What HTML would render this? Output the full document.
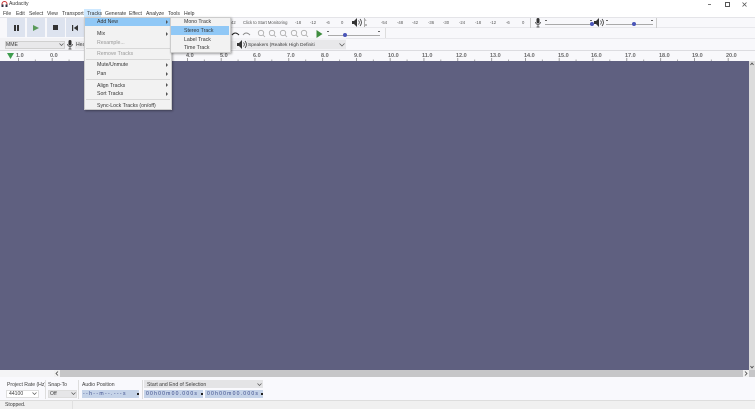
<!DOCTYPE html>
<html><head><meta charset="utf-8"><style>
html,body{margin:0;padding:0}
body{width:755px;height:409px;overflow:hidden;position:relative;background:#f9f9fc;font-family:"Liberation Sans",sans-serif;color:#333;filter:blur(.3px)}
.a{position:absolute;white-space:nowrap}
.t{position:absolute;white-space:nowrap;font-size:5.1px;line-height:7px;color:#3a3a3a}
.m{position:absolute;top:11px;font-size:5.1px;line-height:7px;color:#333;white-space:nowrap}
.r{position:absolute;top:53px;font-size:5.5px;line-height:7px;color:#444;white-space:nowrap;font-weight:bold;opacity:.8}
.i{position:absolute;font-size:5.2px;line-height:7px;color:#333;white-space:nowrap}
.d{position:absolute;background:#d8d8d8;height:1px}
.b{position:absolute;top:18px;width:18px;height:19px;background:#dde3ef}
.n{position:absolute;top:20px;font-size:4.2px;line-height:5px;color:#555;white-space:nowrap}
.k{position:absolute;font-size:5.1px;line-height:7px;color:#3a4a8a;white-space:nowrap;letter-spacing:1.2px}
</style></head><body>
<div class="a" style="left:0;top:0;width:755px;height:9px;background:#fff"></div>
<svg class="a" style="left:1px;top:1px" width="7" height="7" viewBox="0 0 7 7"><path d="M1 4V3a2.500 2.500 0 0 1 5 0v1" fill="none" stroke="#c33" stroke-width="1"/><rect x="0.500" y="3.500" width="2" height="2.500" fill="#334"/><rect x="4.500" y="3.500" width="2" height="2.500" fill="#334"/></svg>
<div class="t" style="left:9px;top:1px">Audacity</div>
<div class="a" style="left:708px;top:4px;width:3px;height:1px;background:#777"></div>
<div class="a" style="left:725px;top:2px;width:3px;height:3px;border:1px solid #555"></div>
<svg class="a" style="left:741px;top:1px" width="7" height="7"><path d="M1.500 1.500l4 4M5.500 1.500l-4 4" stroke="#555" stroke-width=".8"/></svg>

<div class="a" style="left:0;top:9px;width:755px;height:8px;background:#fff"></div>
<div class="m" style="left:3px">File</div><div class="m" style="left:16px">Edit</div><div class="m" style="left:29px">Select</div><div class="m" style="left:47px">View</div><div class="m" style="left:62px">Transport</div>
<div class="a" style="left:84px;top:9px;width:17px;height:8px;background:#cde8ff"></div><div class="m" style="left:87px">Tracks</div>
<div class="m" style="left:105px">Generate</div><div class="m" style="left:129px">Effect</div><div class="m" style="left:146px">Analyze</div><div class="m" style="left:168px">Tools</div><div class="m" style="left:184px">Help</div>

<div class="a" style="left:0;top:17px;width:755px;height:33px;background:#f8f8fb"></div>
<div class="d" style="left:0;top:17px;width:755px;background:#e4e4e8"></div>
<div class="d" style="left:231px;top:27px;width:524px;background:#e8e8ec"></div>
<div class="d" style="left:231px;top:38px;width:524px;background:#e8e8ec"></div>
<div class="a" style="left:0;top:38px;width:346px;height:12px;background:#f2f2f5"></div>
<div class="b" style="left:7px"></div><div class="b" style="left:27px"></div><div class="b" style="left:47px"></div><div class="b" style="left:66px"></div>
<div class="a" style="left:13.500px;top:25px;width:2px;height:6px;background:#333"></div><div class="a" style="left:16.500px;top:25px;width:2px;height:6px;background:#333"></div>
<svg class="a" style="left:33px;top:25px" width="6" height="6"><path d="M0 0L6 3L0 6Z" fill="#5a9a5a"/></svg>
<div class="a" style="left:53px;top:25px;width:5px;height:5px;background:#333"></div>
<svg class="a" style="left:72px;top:25px" width="6" height="6"><path d="M0 0h1.200v6H0zM6 0v6L1.800 3z" fill="#333"/></svg>

<div class="a" style="left:5px;top:41px;width:60px;height:8px;background:#e8e8ea;border:1px solid #d0d0d0;box-sizing:border-box"></div>
<div class="t" style="left:6px;top:41.500px">MME</div>
<svg class="a" style="left:59px;top:43px" width="5" height="4"><path d="M.5.500l2 2 2-2" fill="none" stroke="#555" stroke-width=".7"/></svg>
<svg class="a" style="left:67px;top:40px" width="6" height="10"><rect x="1.500" y="0" width="3" height="5.500" rx="1.500" fill="#333"/><path d="M.5 4a2.500 2.500 0 0 0 5 0M3 7v2M1.500 9h3" fill="none" stroke="#333" stroke-width=".7"/></svg>
<div class="a" style="left:75px;top:41px;width:10px;height:8px;background:#e8e8ea"></div>
<div class="t" style="left:76px;top:41.500px">Hea</div>

<!-- Meter row -->
<div class="n" style="left:231px">42</div><div class="n" style="left:243px">Click to Start Monitoring</div>
<div class="n" style="left:295px">-18</div><div class="n" style="left:310px">-12</div><div class="n" style="left:326px">-6</div><div class="n" style="left:341px">0</div>
<svg class="a" style="left:352px;top:18px" width="10" height="9"><path d="M0 3h2l3-3v9l-3-3H0z" fill="#333"/><path d="M6.500 2.500a3 3 0 0 1 0 4M8 1a5 5 0 0 1 0 7" fill="none" stroke="#333" stroke-width=".8"/></svg>
<div class="a" style="left:363.500px;top:18px;width:1px;height:9px;background:#aaa"></div>
<div class="n" style="left:365px;top:18px;font-size:3px">L</div><div class="n" style="left:365px;top:23px;font-size:3px">R</div>
<div class="n" style="left:381px">-54</div><div class="n" style="left:397px">-48</div><div class="n" style="left:412px">-42</div><div class="n" style="left:428px">-36</div><div class="n" style="left:443px">-30</div><div class="n" style="left:459px">-24</div><div class="n" style="left:475px">-18</div><div class="n" style="left:490px">-12</div><div class="n" style="left:506px">-6</div><div class="n" style="left:522px">0</div>
<div class="a" style="left:530px;top:18px;width:1px;height:10px;background:#ccc"></div>
<svg class="a" style="left:535px;top:18px" width="6" height="10"><rect x="1.500" y="0" width="3" height="5.500" rx="1.500" fill="#333"/><path d="M.5 4a2.500 2.500 0 0 0 5 0M3 7v2M1.500 9h3" fill="none" stroke="#333" stroke-width=".7"/></svg>
<div class="a" style="left:545px;top:24px;width:46px;height:1px;background:#aaa"></div>
<div class="a" style="left:590px;top:22px;width:4px;height:4px;border-radius:50%;background:#4a55b8"></div>
<svg class="a" style="left:594px;top:18px" width="10" height="9"><path d="M0 3h2l3-3v9l-3-3H0z" fill="#333"/><path d="M6.500 2.500a3 3 0 0 1 0 4M8 1a5 5 0 0 1 0 7" fill="none" stroke="#333" stroke-width=".8"/></svg>
<div class="a" style="left:606px;top:24px;width:47px;height:1px;background:#aaa"></div>
<div class="a" style="left:632px;top:22px;width:4px;height:4px;border-radius:50%;background:#4a55b8"></div>
<div class="a" style="left:545px;top:20px;width:2px;height:1px;background:#666"></div><div class="a" style="left:590px;top:20px;width:2px;height:1px;background:#666"></div>
<div class="a" style="left:606px;top:20px;width:2px;height:1px;background:#666"></div><div class="a" style="left:651px;top:20px;width:2px;height:1px;background:#666"></div>
<div class="a" style="left:656px;top:18px;width:1px;height:10px;background:#ccc"></div>

<!-- Edit row -->
<svg class="a" style="left:231px;top:30px" width="20" height="8"><path d="M1 5Q4 1 8 5" fill="none" stroke="#222" stroke-width="1.100"/><path d="M12 5Q15 1 19 5" fill="none" stroke="#888" stroke-width=".9"/></svg>
<svg class="a" style="left:257px;top:29px" width="52" height="9" fill="none" stroke="#aaa" stroke-width=".8"><circle cx="4" cy="4" r="2.700"/><path d="M6 6l2 2"/><circle cx="15" cy="4" r="2.700"/><path d="M17 6l2 2"/><circle cx="26" cy="4" r="2.700"/><path d="M28 6l2 2"/><circle cx="37" cy="4" r="2.700"/><path d="M39 6l2 2"/><circle cx="47" cy="4" r="2.700"/><path d="M49 6l2 2"/></svg>
<svg class="a" style="left:316px;top:30px" width="7" height="8"><path d="M.5 0L6.500 4L.5 8Z" fill="#3f8c3f"/></svg>
<div class="a" style="left:328px;top:35px;width:52px;height:1px;background:#aaa"></div>
<div class="a" style="left:327px;top:31px;width:2px;height:1px;background:#666"></div><div class="a" style="left:378px;top:31px;width:2px;height:1px;background:#666"></div>
<div class="a" style="left:343px;top:33px;width:4px;height:4px;border-radius:50%;background:#4a55b8"></div>
<div class="a" style="left:385px;top:28px;width:1px;height:10px;background:#ddd"></div>

<!-- Device row right -->
<div class="a" style="left:231px;top:41px;width:5px;height:8px;background:#e8e8ea"></div>
<svg class="a" style="left:237px;top:40px" width="10" height="9"><path d="M0 3h2l3-3v9l-3-3H0z" fill="#333"/><path d="M6.500 2.500a3 3 0 0 1 0 4M8 1a5 5 0 0 1 0 7" fill="none" stroke="#333" stroke-width=".8"/></svg>
<div class="a" style="left:247px;top:40px;width:99px;height:9px;background:#e8e8ea"></div>
<div class="t" style="left:248px;top:41.500px;font-size:4.800px">Speakers (Realtek High Definiti</div>
<svg class="a" style="left:339px;top:43px" width="6" height="4"><path d="M.5.500l2.500 2.500 2.500-2.500" fill="none" stroke="#555" stroke-width=".7"/></svg>

<!-- Ruler -->
<div class="a" style="left:0;top:50px;width:755px;height:11px;background:#f8f8fb;border-top:1px solid #dcdce0;box-sizing:border-box"></div>
<svg class="a" style="left:7px;top:53px" width="7" height="6"><path d="M0 0h7L3.500 6Z" fill="#3f9d4f"/></svg>
<div class="r" style="left:16px">1.0</div><div class="r" style="left:50px">0.0</div>
<div class="r" style="left:186px">4.0</div><div class="r" style="left:220px">5.0</div><div class="r" style="left:253px">6.0</div><div class="r" style="left:287px">7.0</div><div class="r" style="left:321px">8.0</div><div class="r" style="left:354px">9.0</div><div class="r" style="left:388px">10.0</div><div class="r" style="left:422px">11.0</div><div class="r" style="left:456px">12.0</div><div class="r" style="left:490px">13.0</div><div class="r" style="left:524px">14.0</div><div class="r" style="left:558px">15.0</div><div class="r" style="left:591px">16.0</div><div class="r" style="left:625px">17.0</div><div class="r" style="left:659px">18.0</div><div class="r" style="left:692px">19.0</div><div class="r" style="left:726px">20.0</div>
<svg class="a" style="left:0;top:58px" width="755" height="3"><defs><pattern id="p" x="18" width="33.800" height="3" patternUnits="userSpaceOnUse"><rect width=".7" height="3" fill="#777"/><rect x="16.900" y="1.500" width=".7" height="1.500" fill="#888"/></pattern></defs><rect x="18" width="725" height="3" fill="url(#p)"/></svg>

<!-- Canvas -->
<div class="a" style="left:0;top:61px;width:749px;height:309px;background:#5f6080"></div>
<div class="a" style="left:749px;top:61px;width:6px;height:309px;background:#dcdcdc"></div>
<svg class="a" style="left:750px;top:62px" width="4" height="5"><path d="M.5 3L2 1L3.500 3" fill="none" stroke="#444" stroke-width=".8"/></svg>
<div class="a" style="left:0;top:370px;width:755px;height:7px;background:#c6c6c8"></div>
<div class="a" style="left:0;top:370px;width:54px;height:7px;background:#f4f4f6"></div>
<div class="a" style="left:54px;top:370px;width:6px;height:7px;background:#f0f0f0"></div>
<svg class="a" style="left:55px;top:371px" width="4" height="5"><path d="M3 .5L1 2.500L3 4.500" fill="none" stroke="#444" stroke-width=".8"/></svg>
<div class="a" style="left:743px;top:370px;width:6px;height:7px;background:#f0f0f0"></div>
<svg class="a" style="left:744px;top:371px" width="4" height="5"><path d="M1 .5L3 2.500L1 4.500" fill="none" stroke="#444" stroke-width=".8"/></svg>
<svg class="a" style="left:750px;top:365px" width="4" height="5"><path d="M.5 1L2 3L3.500 1" fill="none" stroke="#444" stroke-width=".8"/></svg>

<!-- Bottom -->
<div class="a" style="left:0;top:377px;width:755px;height:23px;background:#f9f9fd"></div>
<div class="a" style="left:0;top:400px;width:755px;height:9px;background:#f0f0f0;border-top:1px solid #ddd;box-sizing:border-box"></div>
<div class="a" style="left:72px;top:400px;width:1px;height:9px;background:#e0e0e0"></div>
<div class="t" style="left:7px;top:381.500px">Project Rate (Hz)</div><div class="t" style="left:48px;top:381.500px">Snap-To</div><div class="t" style="left:82px;top:381.500px">Audio Position</div>
<div class="a" style="left:45px;top:380px;width:1px;height:19px;background:#ddd"></div>
<div class="a" style="left:78px;top:380px;width:1px;height:19px;background:#ddd"></div>
<div class="a" style="left:142px;top:380px;width:1px;height:19px;background:#ddd"></div>
<div class="a" style="left:144px;top:380px;width:119px;height:8px;background:#e4e4e6"></div>
<div class="t" style="left:147px;top:381.500px">Start and End of Selection</div>
<svg class="a" style="left:257px;top:383px" width="5" height="4"><path d="M.5.500l2 2 2-2" fill="none" stroke="#555" stroke-width=".7"/></svg>
<div class="a" style="left:6px;top:390px;width:33px;height:8px;background:#fff;border:1px solid #ddd;box-sizing:border-box"></div>
<div class="t" style="left:9px;top:391px">44100</div>
<svg class="a" style="left:32px;top:392px" width="5" height="4"><path d="M.5.500l2 2 2-2" fill="none" stroke="#555" stroke-width=".7"/></svg>
<div class="a" style="left:48px;top:390px;width:29px;height:8px;background:#e6e6e8;border:1px solid #ddd;box-sizing:border-box"></div>
<div class="t" style="left:50px;top:391px">Off</div>
<svg class="a" style="left:71px;top:392px" width="5" height="4"><path d="M.5.500l2 2 2-2" fill="none" stroke="#555" stroke-width=".7"/></svg>
<div class="a" style="left:82px;top:390px;width:57px;height:8px;background:#c5d3e8"></div>
<div class="k" style="left:83px;top:391px;letter-spacing:1.350px">--h--m--.---s</div>
<div class="a" style="left:144px;top:390px;width:59px;height:8px;background:#c5d3e8"></div>
<div class="k" style="left:146px;top:391px">00h00m00.000s</div>
<div class="a" style="left:205px;top:390px;width:58px;height:8px;background:#c5d3e8"></div>
<div class="k" style="left:207px;top:391px">00h00m00.000s</div>
<div class="a" style="left:136.500px;top:393px;width:2px;height:2px;background:#222"></div>
<div class="a" style="left:200.500px;top:393px;width:2px;height:2px;background:#222"></div>
<div class="a" style="left:260.500px;top:393px;width:2px;height:2px;background:#222"></div>
<div class="t" style="left:5px;top:402px">Stopped.</div>

<!-- Tracks menu -->
<div class="a" style="left:84px;top:17px;width:88px;height:93px;background:#f2f2f2;border:1px solid #ccc;box-sizing:border-box;box-shadow:1px 1px 2px rgba(0,0,0,.35)"></div>
<div class="a" style="left:85px;top:18px;width:86px;height:8px;background:#90c8f6"></div>
<div class="i" style="left:97px;top:19px">Add New</div>
<div class="i" style="left:97px;top:31px">Mix</div>
<div class="i" style="left:97px;top:40px;color:#999">Resample...</div>
<div class="d" style="left:86px;top:48px;width:84px"></div>
<div class="i" style="left:97px;top:51px;color:#999">Remove Tracks</div>
<div class="d" style="left:86px;top:59px;width:84px"></div>
<div class="i" style="left:97px;top:62px">Mute/Unmute</div>
<div class="i" style="left:97px;top:71px">Pan</div>
<div class="d" style="left:86px;top:79px;width:84px"></div>
<div class="i" style="left:97px;top:83px">Align Tracks</div>
<div class="i" style="left:97px;top:91px">Sort Tracks</div>
<div class="d" style="left:86px;top:99px;width:84px"></div>
<div class="i" style="left:97px;top:103px">Sync-Lock Tracks (on/off)</div>
<svg class="a" style="left:165px;top:18px" width="4" height="85" fill="#555"><path d="M1 2l2 2-2 2zM1 14l2 2-2 2zM1 45l2 2-2 2zM1 54l2 2-2 2zM1 65l2 2-2 2zM1 74l2 2-2 2z"/></svg>

<!-- Submenu -->
<div class="a" style="left:170px;top:17px;width:61px;height:36px;background:#f2f2f2;border:1px solid #ccc;box-sizing:border-box;box-shadow:1px 1px 2px rgba(0,0,0,.35)"></div>
<div class="a" style="left:171px;top:26px;width:58px;height:9px;background:#90c8f6"></div>
<div class="i" style="left:184px;top:19px">Mono Track</div>
<div class="i" style="left:184px;top:28px">Stereo Track</div>
<div class="i" style="left:184px;top:37px">Label Track</div>
<div class="i" style="left:184px;top:45px">Time Track</div>
</body></html>
